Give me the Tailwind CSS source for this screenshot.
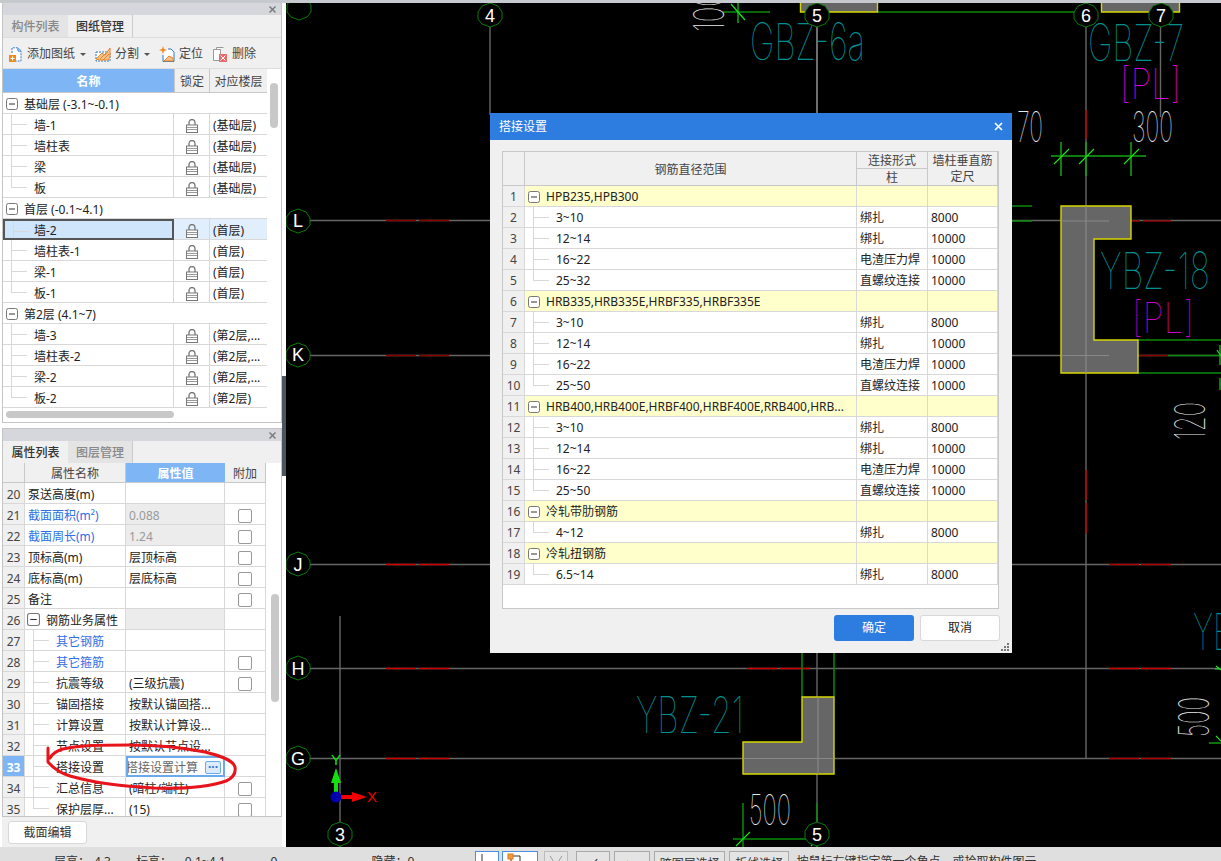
<!DOCTYPE html>
<html lang="zh-CN">
<head>
<meta charset="UTF-8">
<title>搭接设置</title>
<script src="https://cdn.jsdelivr.net/npm/@tailwindcss/browser@4"></script>
</head>
<body class="h-[861px] w-[1221px] overflow-hidden bg-[#f0f0f0] font-['Noto_Sans','Noto_Sans_CJK_SC',sans-serif] text-[12px] leading-[20px] text-[#222]">

<!-- shared icons -->
<svg class="hidden">
  <symbol id="minus" viewBox="0 0 12 12"><rect x=".5" y=".5" width="11" height="11" rx="2" fill="#fff" stroke="#777"/><path d="M3 6h6" stroke="#333"/></symbol>
  <symbol id="lock" viewBox="0 0 12 14"><path d="M3 6V3.5a3 3 0 0 1 6 0V6" fill="none" stroke="#777" stroke-width="1.3"/><rect x=".5" y="6" width="11" height="7.5" fill="#fff" stroke="#777"/><path d="M1 8.5h10M1 10.5h10" stroke="#999"/></symbol>
  <symbol id="bub" viewBox="-13 -13 26 26"><polygon points="0,-12 8,-9 12,-3 12,4 8,9 0,12 -8,9 -12,4 -12,-3 -8,-9" fill="#000" stroke="#0a7a0a"/></symbol>
</svg>

<div class="h-[3px] bg-[#c6c9ce]"></div>

<div class="flex h-[844px]">
  <!-- left side -->
  <aside class="relative w-[286px] shrink-0 bg-white pl-[2px] pr-[4px]">
    <!-- drawing panel -->
    <section class="h-[420px] border-x border-b border-[#c4c4c4] bg-white">
      <div class="flex h-[12px] items-center justify-end bg-[#d5d7dc] pr-[5px]">
        <svg class="size-[7px]" viewBox="0 0 7 7"><path d="M.5.5l6 6M6.5.5l-6 6" stroke="#777" stroke-width="1.4"/></svg>
      </div>
      <div class="flex h-[22px] bg-[#f0f0f0] font-medium">
        <div class="w-[65px] bg-[#e4e4e4] text-center leading-[24px] text-[#888]">构件列表</div>
        <div class="w-[65px] border-r border-[#ccc] text-center leading-[24px] text-[#333]">图纸管理</div>
      </div>
      <div class="flex h-[32px] items-center border-y border-[#ddd] bg-[#f0f0f0] pl-[5px] pt-[2px] text-[#444]">
        <svg class="size-[15px]" viewBox="0 0 15 15"><path d="M4 6V.8h6l3 3V14H8" fill="#fff" stroke="#2f79c8" stroke-dasharray="2 1"/><path d="M10 1v3h3" fill="none" stroke="#2f79c8"/><rect x="1" y="8" width="7" height="7" fill="#f08a1c"/><path d="M4.500 9.500v4M2.500 11.500h4" stroke="#fff"/></svg>
        <span class="ml-[4px]">添加图纸</span>
        <span class="ml-[5px] size-0 border-x-[3px] border-t-[3px] border-x-transparent border-t-[#555]"></span>
        <svg class="ml-[9px] h-[15px] w-[16px]" viewBox="0 0 16 15"><rect x="1" y="5" width="14" height="9" fill="#fff" stroke="#2f79c8" stroke-dasharray="2 1"/><path d="M1 12l6-6 3 2 5-7v9l-2 3H4z" fill="#f6c08a" stroke="#e8862a"/><path d="M5 12l6-6M8 13l6-6" stroke="#e8862a"/></svg>
        <span class="ml-[4px]">分割</span>
        <span class="ml-[5px] size-0 border-x-[3px] border-t-[3px] border-x-transparent border-t-[#555]"></span>
        <svg class="ml-[9px] h-[16px] w-[16px]" viewBox="0 0 16 16"><path d="M4 0l1 3 3 1-3 1-1 3-1-3-3-1 3-1z" fill="#f08a1c"/><path d="M9 3h3l3 3v9.500H4V9" fill="#fff" stroke="#2f79c8"/><path d="M5 15l5-5 4 2v3z" fill="#f6c08a" stroke="#e8862a"/></svg>
        <span class="ml-[4px]">定位</span>
        <svg class="ml-[10px] h-[15px] w-[14px]" viewBox="0 0 14 15"><path d="M3.500 2.500V.5h7M.5 2.500h7v11h-7z" fill="#fff" stroke="#999"/><rect x="6" y="7" width="8" height="8" fill="#e96a6a"/><path d="M7.500 8.500l5 5M12.500 8.500l-5 5" stroke="#fff"/></svg>
        <span class="ml-[5px]">删除</span>
      </div>
      <div class="flex">
        <table class="w-[264px] table-fixed border-separate border-spacing-0 whitespace-nowrap [&_th]:pt-[2px] [&_td]:relative [&_td]:h-[21px] [&_td]:overflow-hidden [&_td]:border-b [&_td]:border-[#d8d8d8] [&_td]:pt-[4px] [&_td]:leading-[16px] [&_i]:absolute [&_i]:left-[8px] [&_i]:top-0 [&_i]:h-[11px] [&_i]:w-[16px] [&_i]:border-b [&_i]:border-l [&_i]:border-[#d8d8d8]">
          <colgroup><col class="w-[171px]"><col class="w-[36px]"><col class="w-[57px]"></colgroup>
          <thead>
            <tr class="h-[24px] bg-[#f0f0f0] text-center text-[#444]">
              <th class="border-b border-[#c8c8c8] bg-[#7eb6f5] font-bold text-white">名称</th>
              <th class="border-x border-b border-[#c8c8c8] font-normal">锁定</th>
              <th class="border-b border-[#c8c8c8] font-normal">对应楼层</th>
            </tr>
          </thead>
          <tbody>
            <tr><td colspan="3" class="pl-[21px]"><svg class="absolute left-[3px] top-[5px] size-[12px]"><use href="#minus"/></svg>基础层 (-3.1~-0.1)</td></tr>
            <tr><td class="border-r pl-[31px]"><i></i><i class="h-[21px]! border-b-0!"></i>墙-1</td><td class="border-r"><svg class="mx-auto h-[14px] w-[12px]"><use href="#lock"/></svg></td><td class="pl-[3px]">(基础层)</td></tr>
            <tr><td class="border-r pl-[31px]"><i></i><i class="h-[21px]! border-b-0!"></i>墙柱表</td><td class="border-r"><svg class="mx-auto h-[14px] w-[12px]"><use href="#lock"/></svg></td><td class="pl-[3px]">(基础层)</td></tr>
            <tr><td class="border-r pl-[31px]"><i></i><i class="h-[21px]! border-b-0!"></i>梁</td><td class="border-r"><svg class="mx-auto h-[14px] w-[12px]"><use href="#lock"/></svg></td><td class="pl-[3px]">(基础层)</td></tr>
            <tr><td class="border-r pl-[31px]"><i></i>板</td><td class="border-r"><svg class="mx-auto h-[14px] w-[12px]"><use href="#lock"/></svg></td><td class="pl-[3px]">(基础层)</td></tr>
            <tr><td colspan="3" class="pl-[21px]"><svg class="absolute left-[3px] top-[5px] size-[12px]"><use href="#minus"/></svg>首层 (-0.1~4.1)</td></tr>
            <tr class="bg-[#e1eefb]"><td class="border-2! border-[#555]! bg-[#cfe5fb] pl-[29px] pt-[2px]! leading-[14px]!"><i></i><i class="h-[21px]! border-b-0!"></i>墙-2</td><td class="border-r"><svg class="mx-auto h-[14px] w-[12px]"><use href="#lock"/></svg></td><td class="pl-[3px]">(首层)</td></tr>
            <tr><td class="border-r pl-[31px]"><i></i><i class="h-[21px]! border-b-0!"></i>墙柱表-1</td><td class="border-r"><svg class="mx-auto h-[14px] w-[12px]"><use href="#lock"/></svg></td><td class="pl-[3px]">(首层)</td></tr>
            <tr><td class="border-r pl-[31px]"><i></i><i class="h-[21px]! border-b-0!"></i>梁-1</td><td class="border-r"><svg class="mx-auto h-[14px] w-[12px]"><use href="#lock"/></svg></td><td class="pl-[3px]">(首层)</td></tr>
            <tr><td class="border-r pl-[31px]"><i></i>板-1</td><td class="border-r"><svg class="mx-auto h-[14px] w-[12px]"><use href="#lock"/></svg></td><td class="pl-[3px]">(首层)</td></tr>
            <tr><td colspan="3" class="pl-[21px]"><svg class="absolute left-[3px] top-[5px] size-[12px]"><use href="#minus"/></svg>第2层 (4.1~7)</td></tr>
            <tr><td class="border-r pl-[31px]"><i></i><i class="h-[21px]! border-b-0!"></i>墙-3</td><td class="border-r"><svg class="mx-auto h-[14px] w-[12px]"><use href="#lock"/></svg></td><td class="pl-[3px]">(第2层,...</td></tr>
            <tr><td class="border-r pl-[31px]"><i></i><i class="h-[21px]! border-b-0!"></i>墙柱表-2</td><td class="border-r"><svg class="mx-auto h-[14px] w-[12px]"><use href="#lock"/></svg></td><td class="pl-[3px]">(第2层,...</td></tr>
            <tr><td class="border-r pl-[31px]"><i></i><i class="h-[21px]! border-b-0!"></i>梁-2</td><td class="border-r"><svg class="mx-auto h-[14px] w-[12px]"><use href="#lock"/></svg></td><td class="pl-[3px]">(第2层,...</td></tr>
            <tr><td class="border-r pl-[31px]"><i></i>板-2</td><td class="border-r"><svg class="mx-auto h-[14px] w-[12px]"><use href="#lock"/></svg></td><td class="pl-[3px]">(第2层)</td></tr>
          </tbody>
        </table>
        <div class="ml-[3px] mt-[14px] h-[45px] w-[8px] rounded-[4px] bg-[#c8c8c8]"></div>
      </div>
      <div class="ml-[3px] mt-[3px] h-[7px] w-[168px] rounded-[4px] bg-[#c8c8c8]"></div>
    </section>

    <!-- property panel -->
    <section class="mt-[5px] h-[389px] border-x border-b border-t border-[#c4c4c4] bg-white">
      <div class="flex h-[12px] items-center justify-end bg-[#d5d7dc] pr-[5px]">
        <svg class="size-[7px]" viewBox="0 0 7 7"><path d="M.5.5l6 6M6.5.5l-6 6" stroke="#777" stroke-width="1.4"/></svg>
      </div>
      <div class="flex h-[22px] bg-[#f0f0f0] font-medium">
        <div class="w-[65px] text-center leading-[24px] text-[#333]">属性列表</div>
        <div class="w-[65px] border-r border-[#ccc] bg-[#e4e4e4] text-center leading-[24px] text-[#888]">图层管理</div>
      </div>
      <div class="flex h-[353px] overflow-hidden">
        <table class="h-fit w-[263px] table-fixed border-separate border-spacing-0 whitespace-nowrap [&_th]:pt-[2px] [&_th]:leading-[17px] [&_td]:relative [&_td]:h-[21px] [&_td]:overflow-hidden [&_td]:border-b [&_td]:border-r [&_td]:border-[#d8d8d8] [&_td]:pt-[4px] [&_td]:leading-[16px] [&_i]:absolute [&_i]:left-[8px] [&_i]:top-0 [&_i]:h-[11px] [&_i]:w-[16px] [&_i]:border-b [&_i]:border-l [&_i]:border-[#d8d8d8] [&_input]:mx-auto [&_input]:block [&_input]:size-[14px] [&_input]:appearance-none [&_input]:rounded-[2px] [&_input]:border [&_input]:border-[#999] [&_input]:bg-white">
          <colgroup><col class="w-[22px]"><col class="w-[101px]"><col class="w-[99px]"><col class="w-[41px]"></colgroup>
          <thead>
            <tr class="h-[20px] bg-[#f0f0f0] text-center text-[#444]">
              <th class="border-b border-r border-[#c8c8c8] font-normal"></th>
              <th class="border-b border-r border-[#c8c8c8] font-normal">属性名称</th>
              <th class="border-b border-[#c8c8c8] bg-[#7eb6f5] font-bold text-white">属性值</th>
              <th class="border-b border-r border-[#c8c8c8] font-normal">附加</th>
            </tr>
          </thead>
          <tbody class="[&_td:first-child]:bg-[#f0f0f0] [&_td:first-child]:text-center [&_td:first-child]:text-[#444]">
            <tr><td>20</td><td class="pl-[3px]">泵送高度(m)</td><td class="pl-[3px]"></td><td></td></tr>
            <tr><td>21</td><td class="pl-[3px] text-[#2f6fe4]">截面面积(m²)</td><td class="bg-[#ececec] pl-[3px] text-[#999]">0.088</td><td><input type="checkbox"></td></tr>
            <tr><td>22</td><td class="pl-[3px] text-[#2f6fe4]">截面周长(m)</td><td class="bg-[#ececec] pl-[3px] text-[#999]">1.24</td><td><input type="checkbox"></td></tr>
            <tr><td>23</td><td class="pl-[3px]">顶标高(m)</td><td class="pl-[3px]">层顶标高</td><td><input type="checkbox"></td></tr>
            <tr><td>24</td><td class="pl-[3px]">底标高(m)</td><td class="pl-[3px]">层底标高</td><td><input type="checkbox"></td></tr>
            <tr><td>25</td><td class="pl-[3px]">备注</td><td class="pl-[3px]"></td><td><input type="checkbox"></td></tr>
            <tr><td>26</td><td class="pl-[21px]"><svg class="absolute left-[2px] top-[4px] size-[13px]"><use href="#minus"/></svg>钢筋业务属性</td><td class="bg-[#ececec]"></td><td></td></tr>
            <tr><td>27</td><td class="pl-[31px] text-[#2f6fe4]"><i></i><i class="h-[21px]! border-b-0!"></i>其它钢筋</td><td></td><td></td></tr>
            <tr><td>28</td><td class="pl-[31px] text-[#2f6fe4]"><i></i><i class="h-[21px]! border-b-0!"></i>其它箍筋</td><td></td><td><input type="checkbox"></td></tr>
            <tr><td>29</td><td class="pl-[31px]"><i></i><i class="h-[21px]! border-b-0!"></i>抗震等级</td><td class="pl-[3px]">(三级抗震)</td><td><input type="checkbox"></td></tr>
            <tr><td>30</td><td class="pl-[31px]"><i></i><i class="h-[21px]! border-b-0!"></i>锚固搭接</td><td class="pl-[3px]">按默认锚固搭...</td><td></td></tr>
            <tr><td>31</td><td class="pl-[31px]"><i></i><i class="h-[21px]! border-b-0!"></i>计算设置</td><td class="pl-[3px]">按默认计算设...</td><td></td></tr>
            <tr><td>32</td><td class="pl-[31px]"><i></i><i class="h-[21px]! border-b-0!"></i>节点设置</td><td class="pl-[3px]">按默认节点设...</td><td></td></tr>
            <tr><td class="bg-[#7eb6f5]! font-bold text-white!">33</td><td class="pl-[31px]"><i></i><i class="h-[21px]! border-b-0!"></i>搭接设置</td><td class="border-2! border-[#6aa9ec]! pt-[1px]! leading-[15px]! text-[#666]"><div class="-ml-[2px] flex items-center">搭接设置计算<span class="ml-[7px] flex h-[13px] w-[16px] items-center justify-center rounded-[2px] border border-[#6aa9ec] bg-[#dcebfb] text-[12px] font-bold leading-none text-[#2f6fc8]">···</span></div></td><td></td></tr>
            <tr><td>34</td><td class="pl-[31px]"><i></i><i class="h-[21px]! border-b-0!"></i>汇总信息</td><td class="pl-[3px]">(暗柱/端柱)</td><td><input type="checkbox"></td></tr>
            <tr><td>35</td><td class="pl-[31px]"><i></i>保护层厚...</td><td class="pl-[3px]">(15)</td><td><input type="checkbox"></td></tr>
          </tbody>
        </table>
        <div class="ml-[5px] mt-[131px] h-[108px] w-[8px] rounded-[4px] bg-[#c8c8c8]"></div>
      </div>
    </section>

    <div class="h-[30px] bg-[#f0f0f0] pl-[6px] pt-[4px]">
      <button class="h-[23px] w-[79px] rounded-[3px] border border-[#d8d8d8] bg-white text-center text-[#333]">截面编辑</button>
    </div>

    <div class="absolute right-0 top-[373px] h-[100px] w-[4px] bg-[#4a5560]"></div>

    <!-- hand-drawn mark -->
    <svg class="absolute left-0 top-[-3px]" width="286" height="861" viewBox="0 0 286 861" fill="none"><path d="M48 748l0 14c6 7 12 11 22 14 28 8 54 10 84 12 28 1 54-1 72-7 7-3 10-8 9-14-2-7-14-11-30-15-24-5-50-7-76-7-27 0-48 0-66 4-7 2-11 5-13 9" stroke="#e8141c" stroke-width="3" stroke-linecap="round"/></svg>
  </aside>

  <!-- drawing canvas -->
  <main class="relative h-[844px] flex-1 bg-black">
    <svg class="block font-['Inter',sans-serif]" width="935" height="844" viewBox="286 3 935 844" fill="none">
      <!-- axis lines -->
      <g stroke="#666">
        <path d="M298 220.500H1221M298 355.500H1221M298 564.500H1221M298 668.500H1221M298 758.500H1221" stroke-width="1.400"/>
        <path d="M340 616V847M490 15V115M817 15V115M817 650V847M1086 15V758M1160.500 15V117" stroke-width="1.400"/>
      </g>
      <g stroke="#8b0000" stroke-width="1.600">
        <path d="M386 220.500h30M419 220.500h30M386 355.500h30M419 355.500h30M1131 221h9M1143 221h28M1139 355.500h29"/>
        <path stroke="#d00000" d="M386 564.500h30M419 564.500h30M386 668.500h30M419 668.500h30M747 668.500h30M780 668.500h30M1109 668.500h30M1141 668.500h30M386 758.500h30M419 758.500h30"/>
        <path stroke="#b00000" d="M1109 564.500h30M1141 564.500h30M1109 758.500h30M1141 758.500h30M1086 110v29M1086 470v30M1086 503v30"/>
      </g>
      <!-- dimension lines -->
      <g stroke="#0a8a0a" stroke-width="1.500">
        <path d="M723 12h47M877 12h183M1060 12h15M802 653v44M834 653v44"/>
        <path d="M743 803v44M733 839h95M817 803v44M1012 206h20M1012 221h20M1138 340h83M1138 373h83M1168 355.500h53"/>
        <path stroke="#12a812" d="M738 3v20M1061 142v34M1086 142v34M1131 142v34M1051 156h95M1220 345v20M1220 378v12"/>
        <path stroke="#1fe01f" stroke-width="1.200" d="M731 4l14 16M1054 164l15-15M1079 164l15-15M1124 164l15-15M736 846l14-14M811 846l13-14M1217 350l4 6M1215 669h6M1216 666l5 4M1209 743h12M1216 736l5 5"/>
      </g>
      <!-- column shapes -->
      <g fill="#666" stroke="#d8d800" stroke-width="1.400">
        <path d="M800.500 3v9h77V3M1101.500 3v9h78V3"/>
        <polygon points="1061,206 1131,206 1131,239 1094,239 1094,340 1138,340 1138,373 1061,373"/>
        <polygon points="802,697 834,697 834,774 743,774 743,742 802,742"/>
      </g>
      <g stroke="#888" stroke-width="1.200">
        <path d="M817 3v112M1086 206v167M1061 221h48M1061 355.500h48M818 697v77M743 758.500h91"/>
      </g>
      <!-- labels -->
      <g font-weight="100" fill="#009090" font-size="51">
        <text x="750" y="60" textLength="115" lengthAdjust="spacingAndGlyphs">GBZ-6a</text>
        <text x="1088" y="61" textLength="96" lengthAdjust="spacingAndGlyphs">GBZ-7</text>
        <text x="1100" y="289" textLength="110" lengthAdjust="spacingAndGlyphs">YBZ-18</text>
        <text x="636" y="733" textLength="108" lengthAdjust="spacingAndGlyphs" font-size="50">YBZ-21</text>
        <text x="1193" y="650" textLength="40" lengthAdjust="spacingAndGlyphs">YB</text>
      </g>
      <g font-weight="100" font-size="42">
        <text x="1120" y="99" fill="#e000e0" textLength="61" lengthAdjust="spacingAndGlyphs">[PL]</text>
        <text x="1132" y="333" fill="#c800c8" textLength="62" lengthAdjust="spacingAndGlyphs">[PL]</text>
      </g>
      <g font-weight="100" fill="#e8e8e8" font-size="42">
        <text x="1017" y="142" textLength="26" lengthAdjust="spacingAndGlyphs">70</text>
        <text x="1132" y="142" textLength="41" lengthAdjust="spacingAndGlyphs">300</text>
        <text x="749" y="825" textLength="42" lengthAdjust="spacingAndGlyphs">500</text>
        <text transform="translate(724 32) rotate(-90)" textLength="41" lengthAdjust="spacingAndGlyphs">100</text>
        <text transform="translate(1205 440) rotate(-90)" textLength="38" lengthAdjust="spacingAndGlyphs">120</text>
        <text transform="translate(1209 737) rotate(-90)" textLength="40" lengthAdjust="spacingAndGlyphs">500</text>
      </g>
      <!-- axis bubbles -->
      <g>
        <use href="#bub" x="286" y="-5" width="26" height="26"/>
        <use href="#bub" x="477" y="2" width="26" height="26"/>
        <use href="#bub" x="804" y="2" width="26" height="26"/>
        <use href="#bub" x="1073" y="2" width="26" height="26"/>
        <use href="#bub" x="1148" y="2" width="26" height="26"/>
        <use href="#bub" x="285" y="208" width="26" height="26"/>
        <use href="#bub" x="285" y="342" width="26" height="26"/>
        <use href="#bub" x="285" y="551" width="26" height="26"/>
        <use href="#bub" x="285" y="655" width="26" height="26"/>
        <use href="#bub" x="285" y="745" width="26" height="26"/>
        <use href="#bub" x="327" y="821" width="26" height="26"/>
        <use href="#bub" x="804" y="821" width="26" height="26"/>
      </g>
      <g fill="#fff" font-size="18" text-anchor="middle" class="font-['Liberation_Sans',sans-serif]">
        <text x="490" y="22">4</text><text x="817" y="22">5</text><text x="1086" y="22">6</text><text x="1161" y="22">7</text>
        <text x="298" y="227">L</text><text x="298" y="361">K</text><text x="298" y="571">J</text><text x="298" y="675">H</text><text x="298" y="765">G</text>
        <text x="340" y="841">3</text><text x="817" y="841">5</text>
      </g>
      <!-- XY axis -->
      <path d="M334 797v-14h-3l5-15 5 15h-3v14z" fill="#12e012"/>
      <path d="M336 795h16v-3l15 5-15 5v-3h-16z" fill="#f00000"/>
      <circle cx="336" cy="797" r="5.500" fill="#0000b0"/>
      <g font-size="15" text-anchor="middle" class="font-['Liberation_Sans',sans-serif]">
        <text x="336" y="765" fill="#12e012">Y</text>
        <text x="372" y="802" fill="#f00000">X</text>
      </g>
    </svg>
  </main>
</div>

<!-- status bar -->
<footer class="flex h-[14px] items-start overflow-hidden bg-[#dfdfdf] text-[#333]">
  <span class="ml-[54px] mt-[5px]">层高：</span><span class="ml-[4px] mt-[5px]">4.3</span>
  <span class="ml-[25px] mt-[5px]">标高：</span><span class="ml-[9px] mt-[5px]">-0.1~4.1</span>
  <span class="ml-[45px] mt-[5px]">0</span>
  <span class="ml-[94px] mt-[5px]">隐藏：</span><span class="mt-[5px]">0</span>
  <div class="ml-[61px] mt-[4px] flex h-[20px] gap-[3px] text-center [&>div]:pt-[2px]">
    <div class="w-[24px] border border-[#4a90e2] bg-white"><svg class="ml-[5px] h-[12px] w-[12px]" viewBox="0 0 12 12" fill="none"><path d="M1 0v12" stroke="#333"/></svg></div>
    <div class="relative w-[36px] border border-[#4a90e2] bg-white"><svg class="absolute left-[4px] top-[1px] size-[14px]" viewBox="0 0 14 14" fill="none"><path d="M4 3h9v11H4z" stroke="#333"/><rect x="1" y="1" width="5" height="5" fill="#f59a3c" stroke="#d87a1c"/></svg></div>
    <div class="ml-[3px] w-[24px] border border-[#bbb] bg-[#e4e4e4]"><svg class="ml-[3px] mt-[1px] size-[16px]" viewBox="0 0 16 16" fill="none"><path d="M2 1l6 9 6-9" stroke="#999"/></svg></div>
    <div class="ml-[5px] w-[34px] border border-[#aaa] bg-[#e4e4e4]">✓</div>
    <div class="ml-[1px] w-[36px] border border-[#aaa] bg-[#e4e4e4] pr-[10px]">+</div>
    <div class="ml-[1px] w-[71px] border border-[#aaa] bg-[#e4e4e4]">跨图层选择</div>
    <div class="ml-[1px] w-[60px] border border-[#aaa] bg-[#e4e4e4]">折线选择</div>
  </div>
  <span class="ml-[7px] mt-[5px] whitespace-nowrap">按鼠标左键指定第一个角点，或拾取构件图元</span>
</footer>

<!-- dialog -->
<div class="absolute left-[490px] top-[113px] h-[540px] w-[522px] bg-[#f0f0f0]">
  <div class="flex h-[27px] items-center justify-between bg-[#2d7de0] pl-[9px] pr-[9px] text-white">
    <span>搭接设置</span>
    <svg class="size-[9px]" viewBox="0 0 9 9"><path d="M1 1l7 7M8 1L1 8" stroke="#fff" stroke-width="1.600"/></svg>
  </div>
  <div class="ml-[12px] mt-[11px] h-[458px] w-[497px] border border-[#c8c8c8] bg-white">
    <table class="w-[495px] table-fixed border-separate border-spacing-0 whitespace-nowrap [&_td]:relative [&_td]:h-[21px] [&_td]:overflow-hidden [&_td]:border-b [&_td]:border-r [&_td]:border-[#d8d8d8] [&_td]:pt-[2px] [&_td]:leading-[18px] [&_i]:absolute [&_i]:left-[8px] [&_i]:top-0 [&_i]:h-[11px] [&_i]:w-[16px] [&_i]:border-b [&_i]:border-l [&_i]:border-[#d8d8d8]">
      <colgroup><col class="w-[22px]"><col class="w-[332px]"><col class="w-[71px]"><col class="w-[70px]"></colgroup>
      <thead class="bg-[#f0f0f0] text-[#444] [&_th]:border-b [&_th]:border-r [&_th]:border-[#c8c8c8] [&_th]:font-normal">
        <tr class="h-[17px]"><th rowspan="2"></th><th rowspan="2" class="pt-[2px]">钢筋直径范围</th><th class="pt-[1px] leading-[15px]">连接形式</th><th rowspan="2" class="pt-[1px] leading-[16px]">墙柱垂直筋<br>定尺</th></tr>
        <tr class="h-[17px]"><th class="pt-[1px] leading-[15px]">柱</th></tr>
      </thead>
      <tbody class="[&_td:first-child]:bg-[#f0f0f0] [&_td:first-child]:text-center [&_td:first-child]:text-[#444] [&_td:nth-child(n+3)]:pl-[3px]">
        <tr class="bg-[#ffffcc]"><td>1</td><td class="pl-[21px]"><svg class="absolute left-[3px] top-[5px] size-[12px]"><use href="#minus"/></svg>HPB235,HPB300</td><td></td><td></td></tr>
        <tr><td>2</td><td class="pl-[31px]"><i></i><i class="h-[21px]! border-b-0!"></i>3~10</td><td>绑扎</td><td>8000</td></tr>
        <tr><td>3</td><td class="pl-[31px]"><i></i><i class="h-[21px]! border-b-0!"></i>12~14</td><td>绑扎</td><td>10000</td></tr>
        <tr><td>4</td><td class="pl-[31px]"><i></i><i class="h-[21px]! border-b-0!"></i>16~22</td><td>电渣压力焊</td><td>10000</td></tr>
        <tr><td>5</td><td class="pl-[31px]"><i></i>25~32</td><td>直螺纹连接</td><td>10000</td></tr>
        <tr class="bg-[#ffffcc]"><td>6</td><td class="pl-[21px]"><svg class="absolute left-[3px] top-[5px] size-[12px]"><use href="#minus"/></svg>HRB335,HRB335E,HRBF335,HRBF335E</td><td></td><td></td></tr>
        <tr><td>7</td><td class="pl-[31px]"><i></i><i class="h-[21px]! border-b-0!"></i>3~10</td><td>绑扎</td><td>8000</td></tr>
        <tr><td>8</td><td class="pl-[31px]"><i></i><i class="h-[21px]! border-b-0!"></i>12~14</td><td>绑扎</td><td>10000</td></tr>
        <tr><td>9</td><td class="pl-[31px]"><i></i><i class="h-[21px]! border-b-0!"></i>16~22</td><td>电渣压力焊</td><td>10000</td></tr>
        <tr><td>10</td><td class="pl-[31px]"><i></i>25~50</td><td>直螺纹连接</td><td>10000</td></tr>
        <tr class="bg-[#ffffcc]"><td>11</td><td class="pl-[21px]"><svg class="absolute left-[3px] top-[5px] size-[12px]"><use href="#minus"/></svg>HRB400,HRB400E,HRBF400,HRBF400E,RRB400,HRB...</td><td></td><td></td></tr>
        <tr><td>12</td><td class="pl-[31px]"><i></i><i class="h-[21px]! border-b-0!"></i>3~10</td><td>绑扎</td><td>8000</td></tr>
        <tr><td>13</td><td class="pl-[31px]"><i></i><i class="h-[21px]! border-b-0!"></i>12~14</td><td>绑扎</td><td>10000</td></tr>
        <tr><td>14</td><td class="pl-[31px]"><i></i><i class="h-[21px]! border-b-0!"></i>16~22</td><td>电渣压力焊</td><td>10000</td></tr>
        <tr><td>15</td><td class="pl-[31px]"><i></i>25~50</td><td>直螺纹连接</td><td>10000</td></tr>
        <tr class="bg-[#ffffcc]"><td>16</td><td class="pl-[21px]"><svg class="absolute left-[3px] top-[5px] size-[12px]"><use href="#minus"/></svg>冷轧带肋钢筋</td><td></td><td></td></tr>
        <tr><td>17</td><td class="pl-[31px]"><i></i>4~12</td><td>绑扎</td><td>8000</td></tr>
        <tr class="bg-[#ffffcc]"><td>18</td><td class="pl-[21px]"><svg class="absolute left-[3px] top-[5px] size-[12px]"><use href="#minus"/></svg>冷轧扭钢筋</td><td></td><td></td></tr>
        <tr><td>19</td><td class="pl-[31px]"><i></i>6.5~14</td><td>绑扎</td><td>8000</td></tr>
      </tbody>
    </table>
  </div>
  <div class="mr-[12px] mt-[6px] flex justify-end gap-[6px]">
    <button class="h-[26px] w-[80px] rounded-[3px] bg-[#2d7de0] text-white">确定</button>
    <button class="h-[26px] w-[80px] rounded-[3px] border border-[#d8d8d8] bg-white text-[#222]">取消</button>
  </div>
  <svg class="absolute bottom-[2px] right-[3px] size-[8px]" viewBox="0 0 8 8" fill="#777"><rect x="6" y="0" width="2" height="2"/><rect x="3" y="3" width="2" height="2"/><rect x="6" y="3" width="2" height="2"/><rect x="0" y="6" width="2" height="2"/><rect x="3" y="6" width="2" height="2"/><rect x="6" y="6" width="2" height="2"/></svg>
</div>
</body>
</html>
